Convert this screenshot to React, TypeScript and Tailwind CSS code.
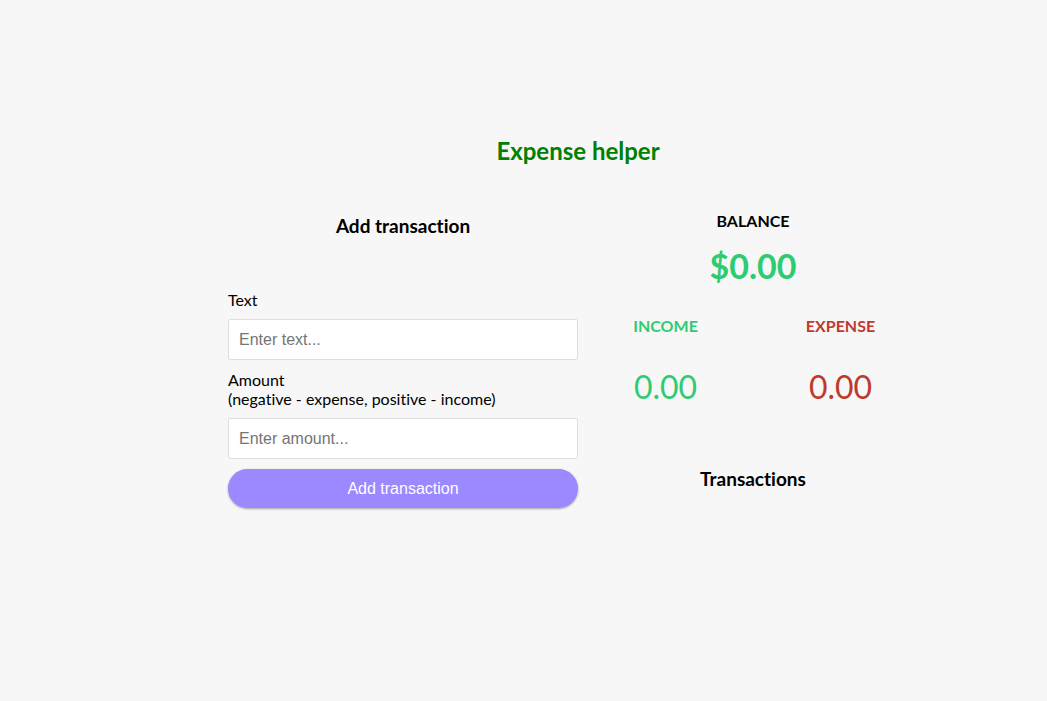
import { useState, type FormEvent } from "react";

type Transaction = { id: number; text: string; amount: number };

const money = (value: number) => value.toFixed(2);

export default function App() {
  const [text, setText] = useState("");
  const [amount, setAmount] = useState("");
  const [items, setItems] = useState<Transaction[]>([]);

  const income = items.reduce((sum, t) => (t.amount > 0 ? sum + t.amount : sum), 0);
  const expense = items.reduce((sum, t) => (t.amount < 0 ? sum - t.amount : sum), 0);
  const balance = income - expense;

  const submit = (event: FormEvent) => {
    event.preventDefault();
    const value = Number(amount);
    if (!text || !value) return;
    setItems([...items, { id: Date.now(), text, amount: value }]);
    setText("");
    setAmount("");
  };

  return (
    <div className="flex min-h-screen flex-col items-center bg-[#f7f7f7] pt-[135px] pl-[109px] font-['Lato',sans-serif] text-base text-black [font-variant-ligatures:none]">
      <div className="flex w-full max-w-[700px] flex-col">
        <h1 className="text-center text-2xl font-bold text-[#008000]">Expense helper</h1>
        <main className="mt-8 grid grid-cols-2">
          <section>
            <h2 className="mt-[15px] text-center text-[19px] leading-6 font-bold">Add transaction</h2>
            <form onSubmit={submit} className="mt-[52px]">
              <label htmlFor="text" className="my-2.5 block leading-[19px]">Text</label>
              <input
                id="text"
                type="text"
                value={text}
                onChange={(e) => setText(e.target.value)}
                placeholder="Enter text..."
                className="block w-full rounded-xs border border-[#dedede] bg-white p-2.5 font-['Liberation_Sans',sans-serif] leading-[19px] placeholder:text-[#757575]"
              />
              <label htmlFor="amount" className="my-2.5 block leading-[19px]">
                Amount
                <br />
                (negative - expense, positive - income)
              </label>
              <input
                id="amount"
                type="text"
                inputMode="decimal"
                value={amount}
                onChange={(e) => setAmount(e.target.value)}
                placeholder="Enter amount..."
                className="block w-full rounded-xs border border-[#dedede] bg-white p-2.5 font-['Liberation_Sans',sans-serif] leading-[19px] placeholder:text-[#757575]"
              />
              <button
                type="submit"
                className="mt-2.5 block w-full rounded-full bg-[#9c88ff] p-2.5 font-['Liberation_Sans',sans-serif] leading-[19px] text-white shadow-[0_1px_3px_rgba(0,0,0,0.12),0_1px_2px_rgba(0,0,0,0.24)]"
              >
                Add transaction
              </button>
            </form>
          </section>
          <section className="flex flex-col">
            <h2 className="mt-3 text-center leading-5 font-bold">BALANCE</h2>
            <p className="mt-[15px] text-center text-[34px] leading-10 font-bold text-[#2ecc71]">${money(balance)}</p>
            <div className="mt-[30px] grid grid-cols-2 text-center">
              <div className="text-[#2ecc71]">
                <h3 className="leading-5 font-bold">INCOME</h3>
                <p className="mt-[33px] text-[32px] leading-9">{money(income)}</p>
              </div>
              <div className="text-[#c0392b]">
                <h3 className="leading-5 font-bold">EXPENSE</h3>
                <p className="mt-[33px] text-[32px] leading-9">{money(expense)}</p>
              </div>
            </div>
            <h2 className="mt-[62px] text-center text-[19px] leading-6 font-bold">Transactions</h2>
            <ul>
              {items.map((t) => (
                <li key={t.id} className="flex justify-between px-4 py-2">
                  <span>{t.text}</span>
                  <span>{money(t.amount)}</span>
                </li>
              ))}
            </ul>
          </section>
        </main>
      </div>
    </div>
  );
}
